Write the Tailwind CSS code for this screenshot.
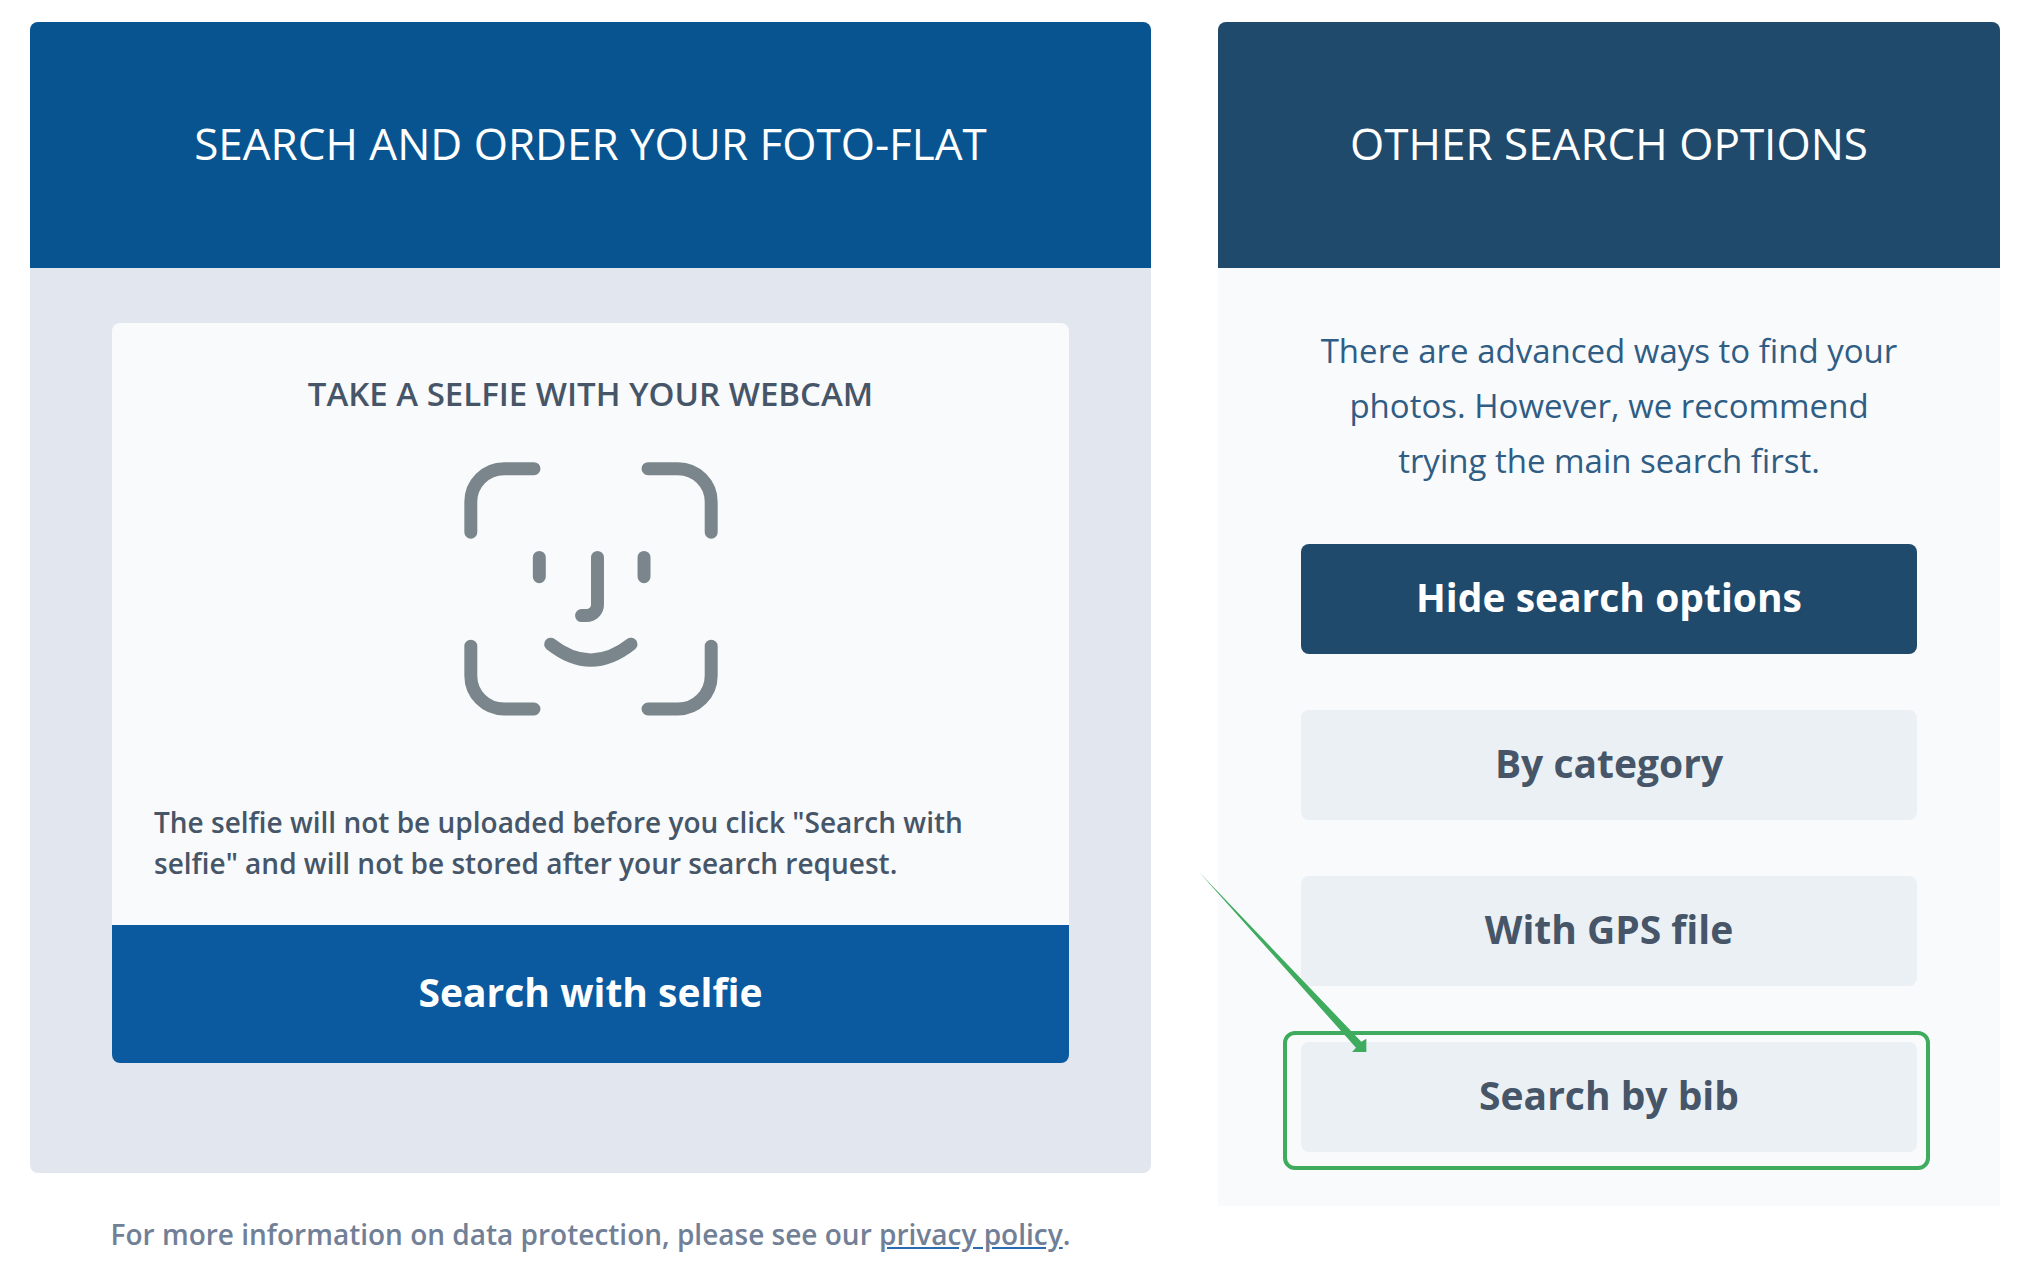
<!DOCTYPE html>
<html lang="en">
<head>
    <meta charset="UTF-8">
    <title>Foto-Flat Search</title>
    <script src="https://cdn.jsdelivr.net/npm/@tailwindcss/browser@4"></script>
</head>
<body class="bg-white min-h-screen font-['Open_Sans',sans-serif]">
    <main class="grid grid-cols-[1121fr_782fr] items-start gap-[67px] pt-[22px] pl-[30px] pr-10">
        <!-- Selfie search -->
        <section>
            <div class="rounded-lg overflow-hidden bg-[#e2e6ef]">
                <h1 class="bg-[#085491] text-white text-[44px] leading-[60px] text-center pt-[91px] pb-[95px]">SEARCH AND ORDER YOUR FOTO-FLAT</h1>
                <div class="px-[82px] pt-[55px] pb-[110px]">
                    <div class="rounded-lg overflow-hidden bg-[#f9fafc]">
                        <div class="px-[42px] pt-[43px] pb-[41px] font-semibold text-[#465668]">
                            <h2 class="text-[33px] leading-[55px] text-center">TAKE A SELFIE WITH YOUR WEBCAM</h2>
                            <svg class="block mx-auto mt-[41px] w-[254px] h-[254px]" viewBox="70 93 763 764" fill="none" stroke="#7b868c" stroke-width="39" stroke-linecap="round">
                                <path d="M280 113H190A100 100 0 0 0 90 213V304" />
                                <path d="M623 113H713A100 100 0 0 1 813 213V304" />
                                <path d="M90 647V736A100 100 0 0 0 190 836H280" />
                                <path d="M813 647V736A100 100 0 0 1 713 836H623" />
                                <path d="M296 380V438M611 380V438" />
                                <path d="M471 380V522A33 33 0 0 1 438 555H423" />
                                <path d="M330 641Q451 737 572 641" />
                            </svg>
                            <p class="mt-[86px] text-[28px] leading-[41px]">The selfie will not be uploaded before you click "Search with selfie" and will not be stored after your search request.</p>
                        </div>
                        <button class="block w-full h-[138px] pb-1 bg-[#0b5a9f] text-white text-[39px] font-bold cursor-pointer">Search with selfie</button>
                    </div>
                </div>
            </div>
            <p class="mt-[41px] text-[28px] leading-[41px] text-center font-semibold text-[#718096]">For more information on data protection, please see our <a href="#" class="underline decoration-[#2b6cb0]">privacy policy</a>.</p>
        </section>

        <!-- Other options -->
        <section class="bg-[#f9fafc] rounded-t-lg">
            <h1 class="rounded-t-lg bg-[#1f4a6c] text-white text-[44px] leading-[60px] text-center pt-[91px] pb-[95px]">OTHER SEARCH OPTIONS</h1>
            <div class="px-[83px] pt-[55px] pb-[54px] flex flex-col gap-14 text-[#465668]">
                <p class="px-4 text-[33px] leading-[55px] text-center text-[#2f5d84]">There are advanced ways to find your photos. However, we recommend trying the main search first.</p>
                <button class="h-[110px] pb-1 rounded-lg bg-[#1f4a6c] text-white text-[39px] font-bold cursor-pointer">Hide search options</button>
                <button class="h-[110px] pb-1 rounded-lg bg-[#ebf0f5] text-[39px] font-bold cursor-pointer">By category</button>
                <button class="h-[110px] pb-1 rounded-lg bg-[#ebf0f5] text-[39px] font-bold cursor-pointer">With GPS file</button>
                <div class="relative">
                    <button class="block w-full h-[110px] pb-1 rounded-lg bg-[#ebf0f5] text-[39px] font-bold cursor-pointer">Search by bib</button>
                    <!-- Highlight frame and arrow -->
                    <div class="absolute -left-[18px] -right-[13px] -top-[11px] -bottom-[18px] border-4 border-[#3fab5e] rounded-xl pointer-events-none"></div>
                    <svg class="absolute -left-[102px] -top-[170px] w-[168px] h-[181px] pointer-events-none" viewBox="0 0 504 543" fill="#3fab5e">
                        <path d="M0 0L487 509L502 500V540H459L471 527Z" />
                    </svg>
                </div>
            </div>
        </section>
    </main>
</body>
</html>
